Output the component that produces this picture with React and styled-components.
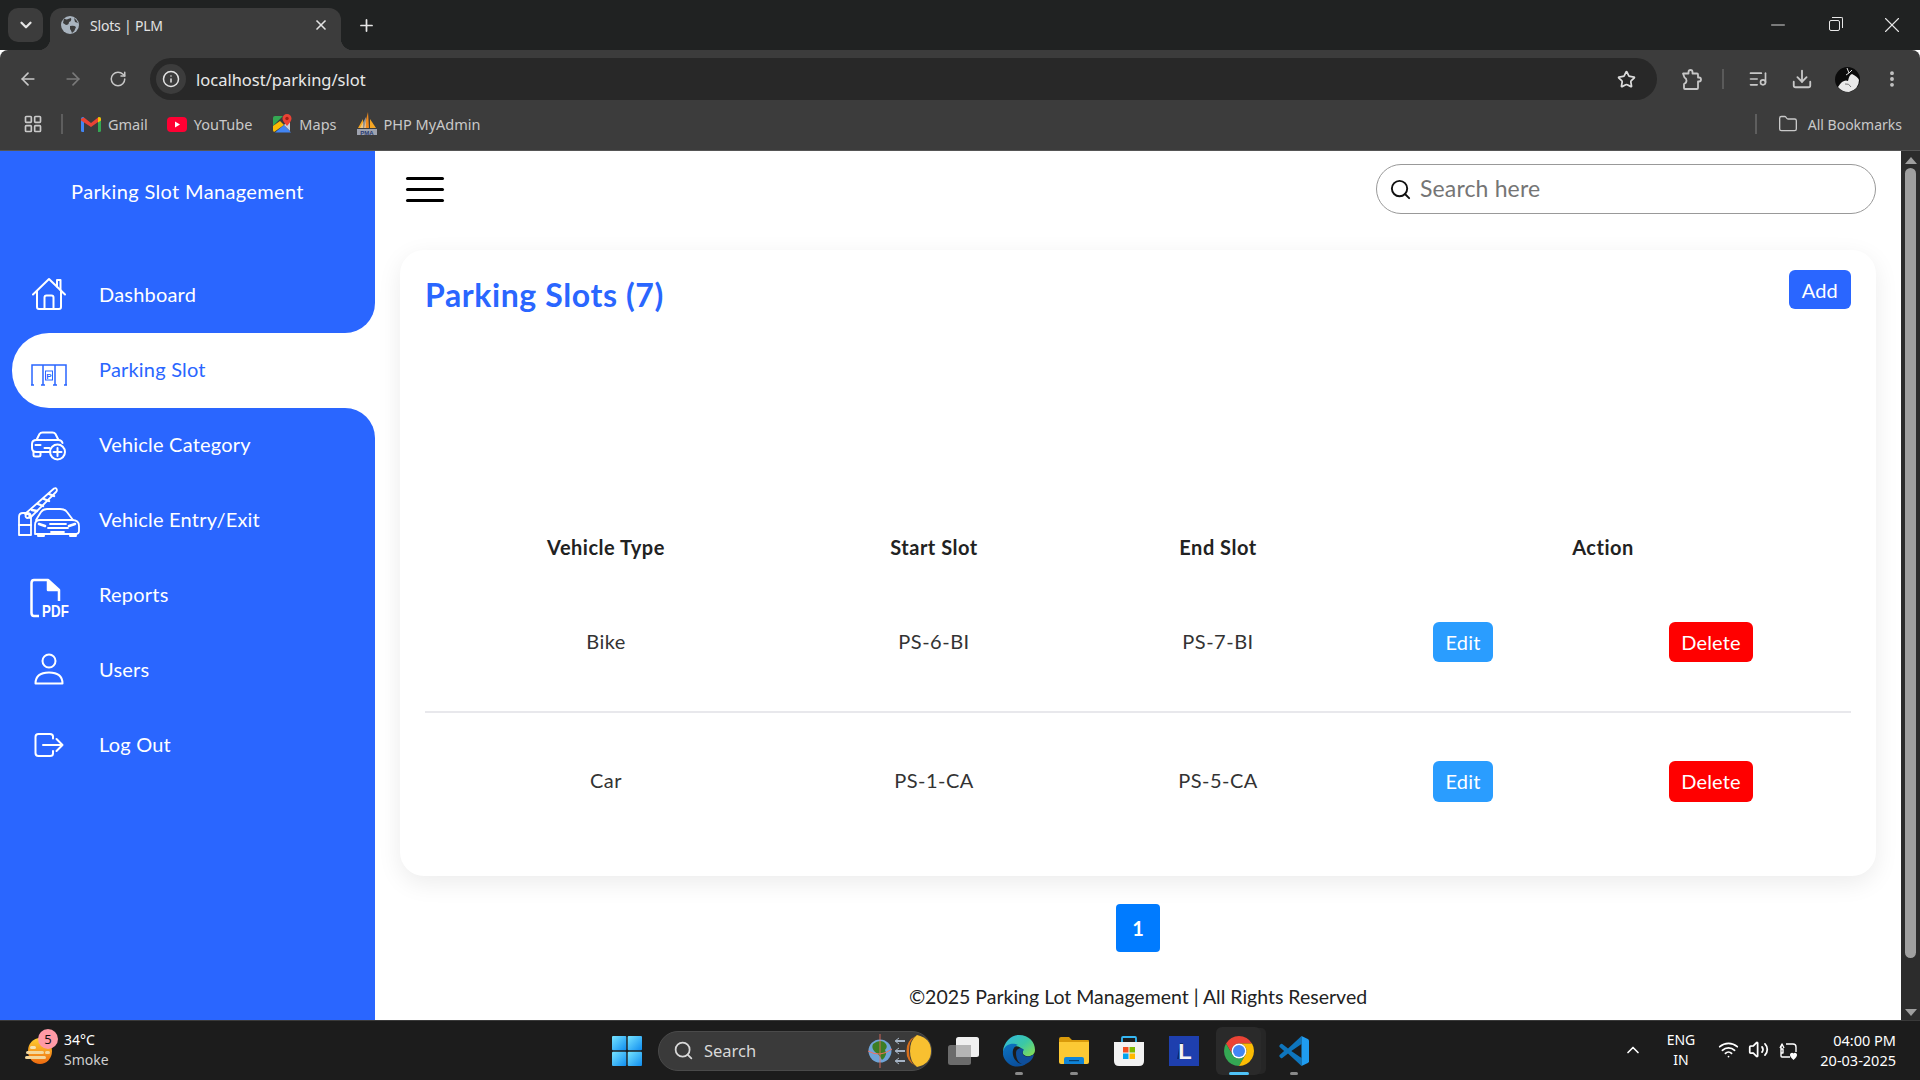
import React from "react";
import styled, { createGlobalStyle } from "styled-components";
import {
  ArrowLeft,
  ArrowRight,
  ChevronDown,
  ChevronUp,
  Download,
  EllipsisVertical,
  Folder,
  Info,
  LayoutGrid,
  ListMusic,
  Minus,
  Plus,
  RotateCw,
  Search,
  Star,
  Volume2,
  Wifi,
  X,
} from "lucide-react";

const BLUE = "#2a66ff";
const UI_FONT = '"Noto Sans", "Open Sans", sans-serif';
const PAGE_FONT = '"Lato", "Noto Sans", sans-serif';

const GlobalStyle = createGlobalStyle`
  html, body {
    margin: 0;
    padding: 0;
    height: 100%;
    overflow: hidden;
    background: #fff;
  }
  * {
    box-sizing: border-box;
  }
`;

/* ---- logos and drawn icons ---- */

const HomeIcon = () => (
  <svg width="34" height="33" viewBox="0 0 34 33" fill="none" stroke="currentColor" strokeWidth="2" strokeLinejoin="round" strokeLinecap="round">
    <path d="M1 17 L17 1.500 L33 17" />
    <path d="M25 9 V2.500 H28.500 V12.500" />
    <path d="M5 14 V29.500 a2 2 0 0 0 2 2 H27 a2 2 0 0 0 2 -2 V14" />
    <path d="M12.500 31.500 V20 a2 2 0 0 1 2 -2 h5 a2 2 0 0 1 2 2 V31.500" />
  </svg>
);

const SlotIcon = () => (
  <svg width="36" height="22" viewBox="0 0 36 22" fill="none" stroke="currentColor" strokeWidth="1.500">
    <path d="M1 21 V1 H35 V21" />
    <path d="M12 1 V21 M24 1 V21" />
    <path d="M0 21 H3 M10 21 H14 M22 21 H26 M33 21 H36" />
    <rect x="14.500" y="7" width="7" height="9" strokeWidth="1" />
    <text x="18" y="14.500" textAnchor="middle" fontFamily="Liberation Sans" fontSize="8" fontWeight="700" fill="currentColor" stroke="none">P</text>
  </svg>
);

const CarPlusIcon = () => (
  <svg width="37" height="30" viewBox="0 0 37 30" fill="none" stroke="currentColor" strokeWidth="2" strokeLinecap="round" strokeLinejoin="round">
    <path d="M6 9 L9 3 Q10 1.500 12 1.500 H22 Q24 1.500 25 3 L28 9" />
    <path d="M20 21 H6 Q1.500 21 1.500 17 V13 Q1.500 9 6 9 H28 Q31 9 32 12" />
    <path d="M3 21 V24 Q3 25.500 5 25.500 H8 Q10 25.500 10 24 V21" />
    <path d="M5 14 H10 M14 17 H19" />
    <circle cx="27" cy="21" r="7.500" />
    <path d="M27 17 V25 M23 21 H31" />
  </svg>
);

const BarrierCarIcon = () => (
  <svg width="62" height="50" viewBox="0 0 62 50" fill="none" stroke="currentColor" strokeWidth="1.800" strokeLinecap="round" strokeLinejoin="round">
    <path d="M1 48 V30 Q1 26 5 26 H9 Q13 26 13 30 V48 Z" />
    <path d="M1 38 H13" />
    <path d="M7 27 L36 1.500 Q38 0.500 38.500 2 Q39.500 3.500 38 5 L12 31" />
    <path d="M14 23 L19 24 M20 17 L25 19 M26 12 L31 14 M31 7 L36 9" strokeWidth="2.400" />
    <circle cx="9.500" cy="29" r="2" />
    <path d="M18 33 L23 25 Q25 22 29 22 H42 Q47 22 49 25 L55 33" />
    <path d="M17 47 Q17 41 17 38 Q17 33 22 33 H54 Q61 33 61 39 V44 Q61 47 57 47 Z" />
    <path d="M20 47 V49 H26 V47 M52 47 V49 H58 V47" />
    <path d="M21 37 L27 39 M57 37 L51 39" strokeWidth="2.600" />
    <path d="M32 37 H48 M30 41 H50 M33 45 H46" />
  </svg>
);

const PdfIcon = () => (
  <svg width="48" height="44" viewBox="0 0 48 44" fill="none" stroke="currentColor" strokeWidth="2.500" strokeLinejoin="round">
    <path d="M9 38 H4 Q1.500 38 1.500 35 V5 Q1.500 2 4 2 H18 L29 12 V23" />
    <path d="M18 2 V12 H29" fill="currentColor" />
    <text x="12" y="38.500" fontFamily="Liberation Sans" fontSize="17" fontWeight="700" fill="currentColor" stroke="none" textLength="27" lengthAdjust="spacingAndGlyphs">PDF</text>
  </svg>
);

const UserIcon = () => (
  <svg width="30" height="32" viewBox="0 0 30 32" fill="none" stroke="currentColor" strokeWidth="2" strokeLinejoin="round">
    <circle cx="15" cy="8" r="6.500" />
    <path d="M1.500 30.500 Q1.500 19.500 15 19.500 Q28.500 19.500 28.500 30.500 Z" />
  </svg>
);

const LogoutIcon = () => (
  <svg width="30" height="25" viewBox="0 0 30 25" fill="none" stroke="currentColor" strokeWidth="2" strokeLinecap="round" strokeLinejoin="round">
    <path d="M19 6 V4 Q19 1.500 16 1.500 H4.500 Q1.500 1.500 1.500 4.500 V20.500 Q1.500 23.500 4.500 23.500 H16 Q19 23.500 19 21 V18.500" />
    <path d="M9 12.500 H28.500 M22.500 6.500 L28.500 12.500 L22.500 18.500" />
  </svg>
);

const TabGlobe = () => (
  <svg width="18" height="18" viewBox="0 0 18 18">
    <circle cx="9" cy="9" r="9" fill="#a9b4bf" />
    <path d="M3 2.500 Q6 4 7 3 L10 2 Q11 5 8 6 Q8 9 5 9 L2 7 Z" fill="#3c3c3c" />
    <path d="M9 10 Q13 9 15 11 Q14 15 11 17 Q10 14 9 13 Z" fill="#3c3c3c" />
    <path d="M13 2 Q16 4 17 7 L14 6 Z" fill="#3c3c3c" />
  </svg>
);

const ExtensionIcon = () => (
  <svg width="21" height="21" viewBox="0 0 21 21" fill="none" stroke="#c7c7c7" strokeWidth="1.800" strokeLinejoin="round">
    <path d="M2 4.500 H7.500 V3 Q7.500 1 9.500 1 Q11.500 1 11.500 3 V4.500 H16 Q17 4.500 17 5.500 V8.500 H18 Q20 8.500 20 10.500 Q20 12.500 18 12.500 H17 V19 Q17 20 16 20 H4 Q3 20 3 19 V15 Q5.500 14 5.500 11.500 Q5.500 9.500 3.500 8.500 Z" />
  </svg>
);

const GmailLogo = () => (
  <svg width="20" height="15" viewBox="0 0 20 15">
    <path d="M0 2 Q0 0 2 0 L3 0.500 V15 H1.500 Q0 15 0 13.500 Z" fill="#4285f4" />
    <path d="M20 2 Q20 0 18 0 L17 0.500 V15 H18.500 Q20 15 20 13.500 Z" fill="#34a853" />
    <path d="M0 2 L3 0.500 L10 6 L17 0.500 L17 5 L10 10 L0 3.500 Z" fill="#ea4335" />
    <path d="M17 0.500 L18 0 Q20 0 20 2 V3.500 L17 5.500 Z" fill="#fbbc04" />
  </svg>
);

const YoutubeLogo = () => (
  <svg width="20" height="15" viewBox="0 0 20 15">
    <rect width="20" height="15" rx="4" fill="#ff0033" />
    <path d="M8 4.500 L13 7.500 L8 10.500 Z" fill="#fff" />
  </svg>
);

const MapsLogo = () => (
  <svg width="20" height="20" viewBox="0 0 20 20">
    <path d="M1 4 Q1 2 3 2 H11 L1 12 Z" fill="#34a853" />
    <path d="M1 12 L8 7 L12 11 L2 18 Q1 17 1 16 Z" fill="#fbbc04" />
    <path d="M3 18.500 L12 11 L19 18.500 Z" fill="#4285f4" />
    <path d="M12 11 L18 5 V17 Z" fill="#c8d2df" />
    <path d="M15 0 A4.500 4.500 0 0 1 19.500 4.500 Q19.500 7 15 12 Q10.500 7 10.500 4.500 A4.500 4.500 0 0 1 15 0 Z" fill="#ea4335" />
    <circle cx="15" cy="4.500" r="1.700" fill="#a01c14" />
  </svg>
);

const PmaLogo = () => (
  <svg width="20" height="24" viewBox="0 0 20 24">
    <path d="M1 16 L6 7 L6 16 Z" fill="#f6a623" />
    <path d="M7 16 L11 0 L12 16 Z" fill="#f08a1d" />
    <path d="M13 16 L13 7 L19 16 Z" fill="#f6a623" />
    <path d="M3 16 L9 5 L9 16 Z" fill="#e5e5e5" opacity="0.500" />
    <rect x="0" y="17" width="20" height="6" fill="#c9cfdf" opacity="0.700" />
    <text x="10" y="22.500" textAnchor="middle" fontFamily="Liberation Sans" fontSize="6" fontWeight="700" fill="#283a72">PMA</text>
  </svg>
);

const Avatar = () => (
  <svg width="25" height="25" viewBox="0 0 25 25">
    <circle cx="12.500" cy="12.500" r="12.500" fill="#0b0b0b" />
    <path d="M3 20 Q8 12 13 14 Q14 8 17 7 Q23 10 24 13 Q24 22 14 25 Q7 25 3 20 Z" fill="#e9e9e9" />
    <path d="M10 17 Q14 16 16 20" stroke="#777" fill="none" />
    <path d="M12 1 L14 6 L11 8 M14 6 L17 3" stroke="#ddd" fill="none" />
  </svg>
);

const WeatherLogo = () => (
  <svg width="28" height="28" viewBox="0 0 28 28">
    <defs>
      <linearGradient id="sunGrad" x1="0" y1="0" x2="0" y2="1">
        <stop offset="0" stopColor="#ffcf30" />
        <stop offset="1" stopColor="#ee6a10" />
      </linearGradient>
    </defs>
    <ellipse cx="15" cy="14" rx="12" ry="13" fill="url(#sunGrad)" />
    <rect x="5" y="9" width="6" height="3" rx="1.500" fill="#f6e3b0" />
    <rect x="1" y="14" width="18" height="3" rx="1.500" fill="#f3d79c" />
    <rect x="20" y="14" width="5" height="3" rx="1.500" fill="#f3d79c" />
    <rect x="0" y="19" width="21" height="3" rx="1.500" fill="#f3d79c" />
  </svg>
);

const WindowsLogo = () => (
  <svg width="30" height="30" viewBox="0 0 30 30">
    <defs>
      <linearGradient id="winGrad" x1="0" y1="0" x2="1" y2="1">
        <stop offset="0" stopColor="#76e4ff" />
        <stop offset="1" stopColor="#0f8df0" />
      </linearGradient>
    </defs>
    <rect x="0" y="0" width="14.300" height="14.300" rx="1" fill="url(#winGrad)" />
    <rect x="15.700" y="0" width="14.300" height="14.300" rx="1" fill="url(#winGrad)" />
    <rect x="0" y="15.700" width="14.300" height="14.300" rx="1" fill="url(#winGrad)" />
    <rect x="15.700" y="15.700" width="14.300" height="14.300" rx="1" fill="url(#winGrad)" />
  </svg>
);

const DoodleLogo = () => (
  <svg width="64" height="34" viewBox="0 0 64 34">
    <circle cx="13" cy="17" r="11.500" fill="#6fa4d8" />
    <path d="M6 10 Q12 5 17 8 Q22 12 18 16 Q21 21 15 26 Q12 20 8 18 Q4 14 6 10 Z" fill="#3d7d23" />
    <path d="M1 17 Q13 24 25 15" stroke="#f07060" fill="none" />
    <path d="M13 0 V34" stroke="#f07060" strokeWidth="0.800" />
    <path d="M29 7 H38 M29 17 H38 M29 27 H38" stroke="#a5b3c4" strokeWidth="2" />
    <path d="M32 4 L28 7 L32 10 M32 14 L28 17 L32 20 M32 24 L28 27 L32 30" stroke="#a5b3c4" fill="none" />
    <path d="M50 1 Q64 4 64 17 Q64 30 50 33 Q43 28 43 17 Q43 6 50 1 Z" fill="#f8c030" />
    <path d="M49 1.500 Q42 6 42 17 Q42 28 49 32.500 Q39 27 39.500 17 Q39 7 49 1.500 Z" fill="#d9701c" />
  </svg>
);

const TaskViewLogo = () => (
  <svg width="32" height="28" viewBox="0 0 32 28">
    <rect x="8" y="0" width="23" height="20" rx="2.500" fill="#f0f0f0" />
    <rect x="0" y="8" width="23" height="20" rx="2.500" fill="#6b6b6b" />
    <rect x="8" y="8" width="15" height="12" fill="#b5b5b5" />
  </svg>
);

const EdgeLogo = () => (
  <svg width="32" height="32" viewBox="0 0 32 32">
    <defs>
      <linearGradient id="edgeA" x1="0" y1="0" x2="1" y2="0.800">
        <stop offset="0" stopColor="#2fb6e4" />
        <stop offset="0.600" stopColor="#3cc8a4" />
        <stop offset="1" stopColor="#7edc5c" />
      </linearGradient>
      <linearGradient id="edgeB" x1="0" y1="0" x2="0.500" y2="1">
        <stop offset="0" stopColor="#0c75c4" />
        <stop offset="1" stopColor="#0a4f9c" />
      </linearGradient>
    </defs>
    <path d="M16 0 C26 0 32 7 32 15 C32 20 27 22 23 21 C20 20 19 18 20 16 C18 10 10 10 6 14 C3 17 1 18 0 16 C1 7 8 0 16 0 Z" fill="url(#edgeA)" />
    <path d="M0 16 C2 9 10 7 15 10 C11 11 9 15 10 20 C11 26 17 31 24 28 C20 32 14 32 10 31 C4 29 -1 23 0 16 Z" fill="url(#edgeB)" />
    <path d="M13 18 C13 13 19 12 21 15 C19 16 19 20 22 21 C25 22.500 29 21 31 19 C30 25 25 30 19 29 C15 28 13 23 13 18 Z" fill="#0f4e9a" />
  </svg>
);

const FolderLogo = () => (
  <svg width="30" height="27" viewBox="0 0 30 27">
    <path d="M0 2 Q0 0 2 0 H10 L13 3 H29 Q30 3 30 4 V10 H0 Z" fill="#d99a0a" />
    <path d="M0 5 H30 V25 Q30 27 28 27 H2 Q0 27 0 25 Z" fill="#fcc934" />
    <path d="M5 27 V22 Q5 20 7 20 H23 Q25 20 25 22 V27 Z" fill="#0f84d8" />
    <rect x="10" y="23" width="10" height="1.200" fill="#063f70" />
  </svg>
);

const StoreLogo = () => (
  <svg width="30" height="30" viewBox="0 0 30 30">
    <path d="M8 6 V2 Q8 1 9 1 H21 Q22 1 22 2 V6" stroke="#35b7f3" strokeWidth="1.800" fill="none" />
    <path d="M0 6 H30 V25 Q30 30 25 30 H5 Q0 30 0 25 Z" fill="#f2f2f2" />
    <rect x="9" y="11" width="5.500" height="5.500" fill="#f25022" />
    <rect x="15.500" y="11" width="5.500" height="5.500" fill="#7fba00" />
    <rect x="9" y="17.500" width="5.500" height="5.500" fill="#00a4ef" />
    <rect x="15.500" y="17.500" width="5.500" height="5.500" fill="#ffb900" />
  </svg>
);

const LLogo = () => (
  <svg width="30" height="30" viewBox="0 0 30 30">
    <rect width="30" height="30" fill="#1e3fae" />
    <path d="M8 23 L11 7 H14 V23 Z" fill="#0d2a70" />
    <text x="16" y="23" textAnchor="middle" fontFamily="Liberation Sans" fontSize="22" fontWeight="700" fill="#f4f4f4">L</text>
  </svg>
);

const ChromeLogo = () => (
  <svg width="30" height="30" viewBox="4 4 40 40">
    <path d="M6.680 14 A20 20 0 0 1 41.320 14 H24 A10 10 0 0 0 15.340 29 Z" fill="#ea4335" />
    <path d="M6.680 14 L15.340 29 A10 10 0 0 0 32.660 29 L24 44 A20 20 0 0 1 6.680 14 Z" fill="#34a853" />
    <path d="M24 14 H41.320 A20 20 0 0 1 24 44 L32.660 29 A10 10 0 0 0 24 14 Z" fill="#fbbc04" />
    <circle cx="24" cy="24" r="10" fill="#fff" />
    <circle cx="24" cy="24" r="8" fill="#4285f4" />
  </svg>
);

const VscodeLogo = () => (
  <svg width="30" height="30" viewBox="0 0 100 100">
    <path d="M75 0 L30 42 L11 27 Q8 25 6 27 L2 31 Q0 34 2 37 L17 50 L2 63 Q0 66 2 69 L6 73 Q8 75 11 73 L30 58 L75 100 V73 L41 50 L75 27 Z" fill="#0e75bd" />
    <path d="M75 0 L96 10 Q100 12 100 16 V84 Q100 88 96 90 L75 100 Z" fill="#1f9cf0" />
  </svg>
);

const BatteryIcon = () => (
  <svg width="22" height="22" viewBox="0 0 22 22" fill="none" stroke="#fff" strokeWidth="1.400" strokeLinejoin="round">
    <path d="M4 7 V17 Q4 18 5 18 H13" />
    <path d="M9 5 H16 Q19 5 19 8 V13" />
    <path d="M3 9 L5 5 L7 9 M4 10 H6 V14 H4" />
    <path d="M13 16 A2 2 0 0 1 16.500 14.500 A2 2 0 0 1 20 16 Q20 18 16.500 21 Q13 18 13 16 Z" fill="#fff" stroke="none" />
  </svg>
);

/* ---- browser frame ---- */

const Page = styled.div`
  width: 1920px;
  height: 1080px;
  display: flex;
  flex-direction: column;
  font-family: ${PAGE_FONT};
  overflow: hidden;
`;

const TabStrip = styled.div`
  height: 50px;
  background: #202222;
  display: flex;
  align-items: flex-end;
  color: #e6e6e6;
  font-family: ${UI_FONT};
`;

const TabListButton = styled.div`
  width: 35px;
  height: 34px;
  margin: 0 7px 8px 8px;
  border-radius: 10px;
  background: #3c3c3c;
  display: flex;
  align-items: center;
  justify-content: center;
`;

const Tab = styled.div`
  position: relative;
  width: 291px;
  height: 42px;
  background: #3c3c3c;
  border-radius: 12px 12px 0 0;
  display: flex;
  align-items: center;
  padding: 0 12px 8px 11px;
  font-size: 14px;
  color: #e3e3e3;

  &::before,
  &::after {
    content: "";
    position: absolute;
    bottom: 0;
    width: 12px;
    height: 12px;
  }
  &::before {
    left: -12px;
    background: radial-gradient(circle at 0 0, transparent 12px, #3c3c3c 12.500px);
  }
  &::after {
    right: -12px;
    background: radial-gradient(circle at 100% 0, transparent 12px, #3c3c3c 12.500px);
  }
`;

const TabTitle = styled.span`
  flex: 1;
  margin-left: 11px;
  letter-spacing: -0.2px;
`;

const NewTab = styled.div`
  width: 50px;
  height: 42px;
  padding-bottom: 8px;
  display: flex;
  align-items: center;
  justify-content: center;
`;

const WindowControls = styled.div`
  margin-left: auto;
  height: 50px;
  display: flex;
  align-items: center;
  padding-right: 0;
`;

const WindowButton = styled.div`
  width: 57px;
  display: flex;
  justify-content: center;
`;

const RestoreGlyph = styled.div`
  position: relative;
  width: 11px;
  height: 11px;
  border: 1px solid #e8e8e8;
  border-radius: 2px;

  &::after {
    content: "";
    position: absolute;
    top: -4px;
    right: -4px;
    width: 10px;
    height: 10px;
    border-top: 1px solid #e8e8e8;
    border-right: 1px solid #e8e8e8;
    border-radius: 0 2px 0 0;
  }
`;

const Toolbar = styled.div`
  height: 50px;
  background: #3c3c3c;
  display: flex;
  align-items: flex-start;
  padding: 8px 0 0 5px;
  border-radius: 8px 8px 0 0;
`;

const ToolSlot = styled.div`
  width: ${(props) => props.$width || "45px"};
  height: 42px;
  display: flex;
  align-items: center;
  justify-content: center;
  flex-shrink: 0;
  color: ${(props) => props.$color || "#c7c7c7"};
`;

const Omnibox = styled.div`
  width: 1507px;
  height: 42px;
  margin: 0 12px 0 10px;
  border-radius: 21px;
  background: #282828;
  display: flex;
  align-items: center;
  padding: 0 21px 0 6px;
  flex-shrink: 0;
`;

const InfoChip = styled.div`
  width: 30px;
  height: 30px;
  border-radius: 50%;
  background: #3c3c3c;
  display: flex;
  align-items: center;
  justify-content: center;
  color: #e3e3e3;
`;

const UrlText = styled.span`
  flex: 1;
  margin-left: 10px;
  font-family: ${UI_FONT};
  font-size: 16.500px;
  color: #e8e8e8;
`;

const ToolDivider = styled.div`
  width: 2px;
  height: 20px;
  margin: 11px 12px 0 9px;
  background: #5a5a5a;
  flex-shrink: 0;
`;

const BookmarkBar = styled.div`
  height: 51px;
  background: #3c3c3c;
  border-bottom: 1px solid #555;
  display: flex;
  align-items: center;
  padding: 0 18px 2px 23px;
  font-family: ${UI_FONT};
  font-size: 14.500px;
  color: #c9c9c9;
`;

const BookmarkDivider = styled.div`
  width: 2px;
  height: 20px;
  background: #5e5e5e;
  margin: ${(props) => props.$margin || "0 18px"};
`;

const Bookmark = styled.div`
  display: flex;
  align-items: center;
  gap: 7px;
  margin-right: ${(props) => props.$right || "20px"};
`;

const BookmarksEnd = styled.div`
  margin-left: auto;
  display: flex;
  align-items: center;
`;

const AllBookmarks = styled.span`
  margin-left: 10px;
  font-size: 14px;
`;

/* ---- application ---- */

const Content = styled.div`
  flex: 1;
  display: flex;
  min-height: 0;
  background: #fff;
`;

const Sidebar = styled.aside`
  width: 375px;
  flex-shrink: 0;
  background: ${BLUE};
  color: #fff;
  display: flex;
  flex-direction: column;
`;

const Brand = styled.div`
  height: 107px;
  padding-bottom: 27px;
  display: flex;
  align-items: center;
  justify-content: center;
  font-size: 20px;
  letter-spacing: 0.35px;
`;

const NavRow = styled.div`
  height: 75px;
  background: ${(props) => (props.$notch ? "#fff" : "transparent")};
`;

const NavItem = styled.div`
  height: 100%;
  display: flex;
  align-items: center;
  margin-left: ${(props) => (props.$active ? "12px" : "0")};
  padding-left: ${(props) => (props.$active ? "87px" : "99px")};
  padding-bottom: 3px;
  font-size: 20px;
  letter-spacing: 0.2px;
  position: relative;
  background: ${(props) => (props.$active ? "#fff" : BLUE)};
  color: ${(props) => (props.$active ? BLUE : "#fff")};
  border-radius: ${(props) =>
    props.$active ? "37px 0 0 37px" : props.$notch === "bottom" ? "0 0 30px 0" : props.$notch === "top" ? "0 30px 0 0" : "0"};
`;

const NavIcon = styled.span`
  position: absolute;
  left: calc(${(props) => (props.$active ? "37px" : "49px")} + ${(props) => props.$dx || 0}px);
  top: calc(50% + ${(props) => props.$dy || 0}px);
  transform: translate(-50%, -50%);
  display: flex;
`;

const Main = styled.main`
  flex: 1;
  min-width: 0;
  display: flex;
  flex-direction: column;
  padding: 0 25px;
`;

const TopBar = styled.header`
  height: 76px;
  flex-shrink: 0;
  display: flex;
  align-items: center;
  justify-content: space-between;
`;

const Hamburger = styled.div`
  width: 38px;
  margin-left: 6px;
  display: flex;
  flex-direction: column;
  gap: 8px;
`;

const HamburgerLine = styled.span`
  height: 3px;
  background: #000;
  border-radius: 2px;
`;

const SearchBox = styled.label`
  width: 500px;
  height: 50px;
  border: 1px solid #999;
  border-radius: 25px;
  display: flex;
  align-items: center;
  gap: 8px;
  padding-left: 12px;
  color: #111;
`;

const SearchInput = styled.input`
  flex: 1;
  border: none;
  outline: none;
  background: none;
  padding: 0 0 2px;
  font-family: ${PAGE_FONT};
  font-size: 23px;
  letter-spacing: 0.15px;

  &::placeholder {
    color: #757575;
    opacity: 1;
  }
`;

const Card = styled.section`
  margin-top: 23px;
  height: 626px;
  flex-shrink: 0;
  background: #fff;
  border-radius: 24px;
  box-shadow: 0 7px 25px rgba(0, 0, 0, 0.08);
  padding: 20px 25px 0;
`;

const CardHead = styled.div`
  display: flex;
  justify-content: space-between;
  align-items: flex-start;
  height: 251px;
`;

const CardTitle = styled.h2`
  margin: 5px 0 0;
  font-size: 32px;
  line-height: 40px;
  font-weight: 700;
  letter-spacing: 0.6px;
  color: ${BLUE};
`;

const ActionButton = styled.button`
  border: none;
  height: ${(props) => props.$height || "40px"};
  padding: 0 ${(props) => props.$pad || "12px"};
  border-radius: 6px;
  font-family: ${PAGE_FONT};
  font-size: 20px;
  letter-spacing: 0.2px;
  color: #fff;
  background: ${(props) => props.$bg};
`;

const Table = styled.table`
  width: 100%;
  border-collapse: collapse;
  table-layout: fixed;
  color: #222;
  font-size: 20px;
`;

const Th = styled.th`
  height: 52px;
  font-weight: 700;
  letter-spacing: 0.5px;
  text-align: center;
  padding: 0;
`;

const Td = styled.td`
  height: ${(props) => props.$height};
  text-align: center;
  padding: 0 0 ${(props) => (props.$text ? "2px" : "0")};
  letter-spacing: 0.5px;
  color: #333;
`;

const Tr = styled.tr`
  border-bottom: ${(props) => (props.$line ? "2px solid #e8e8ec" : "none")};
`;

const Pagination = styled.div`
  margin-top: 28px;
  display: flex;
  justify-content: center;
`;

const PageButton = styled.div`
  width: 44px;
  height: 48px;
  border-radius: 4px;
  display: flex;
  align-items: center;
  justify-content: center;
  background: #007bff;
  color: #fff;
  font-size: 20px;
  font-weight: 700;
`;

const Footer = styled.footer`
  margin-top: 33px;
  text-align: center;
  font-size: 19.500px;
  color: #222;
`;

const ScrollTrack = styled.div`
  width: 19px;
  flex-shrink: 0;
  background: #2c2c2c;
  display: flex;
  flex-direction: column;
  align-items: center;
  padding: 6px 0 4px;
`;

const ScrollArrow = styled.span`
  width: 0;
  height: 0;
  border-left: 6px solid transparent;
  border-right: 6px solid transparent;
  border-${(props) => (props.$up ? "bottom" : "top")}: 7px solid #9f9f9f;
`;

const ScrollThumb = styled.div`
  width: 11px;
  height: 790px;
  margin-top: 4px;
  border-radius: 6px;
  background: #9f9f9f;
`;

const ScrollRest = styled.div`
  flex: 1;
`;

/* ---- taskbar ---- */

const Taskbar = styled.div`
  height: 60px;
  background: #1c1c1c;
  border-top: 1px solid #3a3a3a;
  display: grid;
  grid-template-columns: 604px 718px 1fr;
  align-items: center;
  font-family: ${UI_FONT};
  color: #fff;
  flex-shrink: 0;
`;

const Weather = styled.div`
  display: flex;
  align-items: center;
  padding-left: 25px;
  position: relative;
`;

const WeatherBadge = styled.span`
  position: absolute;
  left: 38px;
  top: -3px;
  width: 20px;
  height: 20px;
  border-radius: 50%;
  background: #ff9aa6;
  color: #111;
  font-size: 13px;
  display: flex;
  align-items: center;
  justify-content: center;
`;

const WeatherText = styled.div`
  margin: -2px 0 0 11px;
  font-size: 14px;
  line-height: 20px;
`;

const SubText = styled.div`
  color: #cfcfcf;
`;

const TaskCenter = styled.div`
  display: flex;
  align-items: center;
`;

const StartSlot = styled.div`
  width: 45px;
  display: flex;
  justify-content: center;
`;

const TaskSearch = styled.div`
  width: 274px;
  height: 40px;
  margin: 0 4px 0 9px;
  border: 1px solid #4a4a4a;
  border-radius: 20px;
  background: #3a3a3a;
  display: flex;
  align-items: center;
  padding-left: 14px;
  font-size: 16.500px;
  color: #d8d8d8;
`;

const TaskSearchLabel = styled.span`
  margin-left: 10px;
  flex: 1;
`;

const TaskSlot = styled.div`
  position: relative;
  width: 55px;
  height: 48px;
  display: flex;
  align-items: center;
  justify-content: center;

  &::before {
    content: "";
    display: ${(props) => (props.$active ? "block" : "none")};
    position: absolute;
    inset: 0 5px;
    border-radius: 6px;
    background: #2a2a2a;
    box-shadow: 6px 0 0 -1px #262626;
  }
  &::after {
    content: "";
    display: ${(props) => (props.$dot ? "block" : "none")};
    position: absolute;
    left: 50%;
    bottom: 0;
    transform: translateX(-50%);
    width: ${(props) => (props.$active ? "20px" : "8px")};
    height: 3px;
    border-radius: 2px;
    background: ${(props) => (props.$active ? "#4fc3f7" : "#8a8a8a")};
  }
  & > svg {
    position: relative;
  }
`;

const Tray = styled.div`
  display: flex;
  align-items: center;
  padding: 0 24px 2px 286px;
  font-size: 14px;
  line-height: 20px;
`;

const TrayItem = styled.div`
  width: ${(props) => props.$width};
  margin-left: ${(props) => props.$gap || "0"};
  display: flex;
  justify-content: center;
  text-align: center;
`;

const Clock = styled.div`
  margin-left: auto;
  text-align: right;
  font-size: 14.500px;
`;

const navItems = [
  { label: "Dashboard", icon: <HomeIcon />, notch: "bottom", dy: -2 },
  { label: "Parking Slot", icon: <SlotIcon />, active: true, dy: 4 },
  { label: "Vehicle Category", icon: <CarPlusIcon />, notch: "top", dy: 0 },
  { label: "Vehicle Entry/Exit", icon: <BarrierCarIcon />, dy: -9 },
  { label: "Reports", icon: <PdfIcon />, dy: 4, dx: 5 },
  { label: "Users", icon: <UserIcon />, dy: -2 },
  { label: "Log Out", icon: <LogoutIcon />, dy: -1 },
];

const slots = [
  { type: "Bike", start: "PS-6-BI", end: "PS-7-BI", height: "139px", line: true, btn: "40px" },
  { type: "Car", start: "PS-1-CA", end: "PS-5-CA", height: "137px", btn: "41px" },
];

const App = () => {
  return (
    <Page>
      <GlobalStyle />
      <TabStrip>
        <TabListButton>
          <ChevronDown size={18} strokeWidth={3} />
        </TabListButton>
        <Tab>
          <TabGlobe />
          <TabTitle>Slots | PLM</TabTitle>
          <X size={16} strokeWidth={2.5} />
        </Tab>
        <NewTab>
          <Plus size={19} strokeWidth={2.2} />
        </NewTab>
        <WindowControls>
          <WindowButton>
            <Minus size={22} strokeWidth={1} />
          </WindowButton>
          <WindowButton>
            <RestoreGlyph />
          </WindowButton>
          <WindowButton>
            <X size={26} strokeWidth={1} />
          </WindowButton>
        </WindowControls>
      </TabStrip>

      <Toolbar>
        <ToolSlot>
          <ArrowLeft size={20} />
        </ToolSlot>
        <ToolSlot $color="#7a7a7a">
          <ArrowRight size={20} />
        </ToolSlot>
        <ToolSlot>
          <RotateCw size={18} />
        </ToolSlot>
        <Omnibox>
          <InfoChip>
            <Info size={18} />
          </InfoChip>
          <UrlText>localhost/parking/slot</UrlText>
          <Star size={19} color="#dcdcdc" strokeWidth={2.2} />
        </Omnibox>
        <ToolSlot $width="44px">
          <ExtensionIcon />
        </ToolSlot>
        <ToolDivider />
        <ToolSlot $width="44px">
          <ListMusic size={20} />
        </ToolSlot>
        <ToolSlot $width="44px">
          <Download size={22} />
        </ToolSlot>
        <ToolSlot $width="46px">
          <Avatar />
        </ToolSlot>
        <ToolSlot $width="44px">
          <EllipsisVertical size={20} strokeWidth={2.6} />
        </ToolSlot>
      </Toolbar>

      <BookmarkBar>
        <LayoutGrid size={20} strokeWidth={2} />
        <BookmarkDivider />
        <Bookmark $right="19px">
          <GmailLogo />
          Gmail
        </Bookmark>
        <Bookmark>
          <YoutubeLogo />
          YouTube
        </Bookmark>
        <Bookmark $right="20px">
          <MapsLogo />
          Maps
        </Bookmark>
        <Bookmark>
          <PmaLogo />
          PHP MyAdmin
        </Bookmark>
        <BookmarksEnd>
          <BookmarkDivider $margin="0 21px 0 0" />
          <Folder size={20} strokeWidth={1.6} />
          <AllBookmarks>All Bookmarks</AllBookmarks>
        </BookmarksEnd>
      </BookmarkBar>

      <Content>
        <Sidebar>
          <Brand>Parking Slot Management</Brand>
          {navItems.map((item) => (
            <NavRow key={item.label} $notch={item.notch}>
              <NavItem $active={item.active} $notch={item.notch}>
                <NavIcon $active={item.active} $dx={item.dx} $dy={item.dy}>
                  {item.icon}
                </NavIcon>
                {item.label}
              </NavItem>
            </NavRow>
          ))}
        </Sidebar>

        <Main>
          <TopBar>
            <Hamburger>
              <HamburgerLine />
              <HamburgerLine />
              <HamburgerLine />
            </Hamburger>
            <SearchBox>
              <Search size={23} strokeWidth={2} />
              <SearchInput placeholder="Search here" />
            </SearchBox>
          </TopBar>

          <Card>
            <CardHead>
              <CardTitle>Parking Slots (7)</CardTitle>
              <ActionButton $bg={BLUE} $height="39px" $pad="13px">
                Add
              </ActionButton>
            </CardHead>
            <Table>
              <colgroup>
                <col width="362" />
                <col width="294" />
                <col width="274" />
                <col width="216" />
                <col width="280" />
              </colgroup>
              <thead>
                <tr>
                  <Th>Vehicle Type</Th>
                  <Th>Start Slot</Th>
                  <Th>End Slot</Th>
                  <Th colSpan={2}>Action</Th>
                </tr>
              </thead>
              <tbody>
                {slots.map((slot) => (
                  <Tr key={slot.type} $line={slot.line}>
                    <Td $text $height={slot.height}>{slot.type}</Td>
                    <Td $text>{slot.start}</Td>
                    <Td $text>{slot.end}</Td>
                    <Td>
                      <ActionButton $bg="#2a9dff" $height={slot.btn}>
                        Edit
                      </ActionButton>
                    </Td>
                    <Td>
                      <ActionButton $bg="#ff0000" $height={slot.btn}>
                        Delete
                      </ActionButton>
                    </Td>
                  </Tr>
                ))}
              </tbody>
            </Table>
          </Card>

          <Pagination>
            <PageButton>1</PageButton>
          </Pagination>
          <Footer>©2025 Parking Lot Management | All Rights Reserved</Footer>
        </Main>

        <ScrollTrack>
          <ScrollArrow $up />
          <ScrollThumb />
          <ScrollRest />
          <ScrollArrow />
        </ScrollTrack>
      </Content>

      <Taskbar>
        <Weather>
          <WeatherLogo />
          <WeatherBadge>5</WeatherBadge>
          <WeatherText>
            34°C
            <SubText>Smoke</SubText>
          </WeatherText>
        </Weather>
        <TaskCenter>
          <StartSlot>
            <WindowsLogo />
          </StartSlot>
          <TaskSearch>
            <Search size={21} />
            <TaskSearchLabel>Search</TaskSearchLabel>
            <DoodleLogo />
          </TaskSearch>
          <TaskSlot>
            <TaskViewLogo />
          </TaskSlot>
          <TaskSlot $dot>
            <EdgeLogo />
          </TaskSlot>
          <TaskSlot $dot>
            <FolderLogo />
          </TaskSlot>
          <TaskSlot>
            <StoreLogo />
          </TaskSlot>
          <TaskSlot>
            <LLogo />
          </TaskSlot>
          <TaskSlot $active $dot>
            <ChromeLogo />
          </TaskSlot>
          <TaskSlot $dot>
            <VscodeLogo />
          </TaskSlot>
        </TaskCenter>
        <Tray>
          <TrayItem $width="50px">
            <ChevronUp size={20} />
          </TrayItem>
          <TrayItem $width="46px">
            <div>
              ENG
              <div>IN</div>
            </div>
          </TrayItem>
          <TrayItem $width="30px" $gap="9px">
            <Wifi size={21} />
          </TrayItem>
          <TrayItem $width="30px">
            <Volume2 size={21} />
          </TrayItem>
          <TrayItem $width="30px">
            <BatteryIcon />
          </TrayItem>
          <Clock>
            04:00 PM
            <div>20-03-2025</div>
          </Clock>
        </Tray>
      </Taskbar>
    </Page>
  );
};

export default App;
